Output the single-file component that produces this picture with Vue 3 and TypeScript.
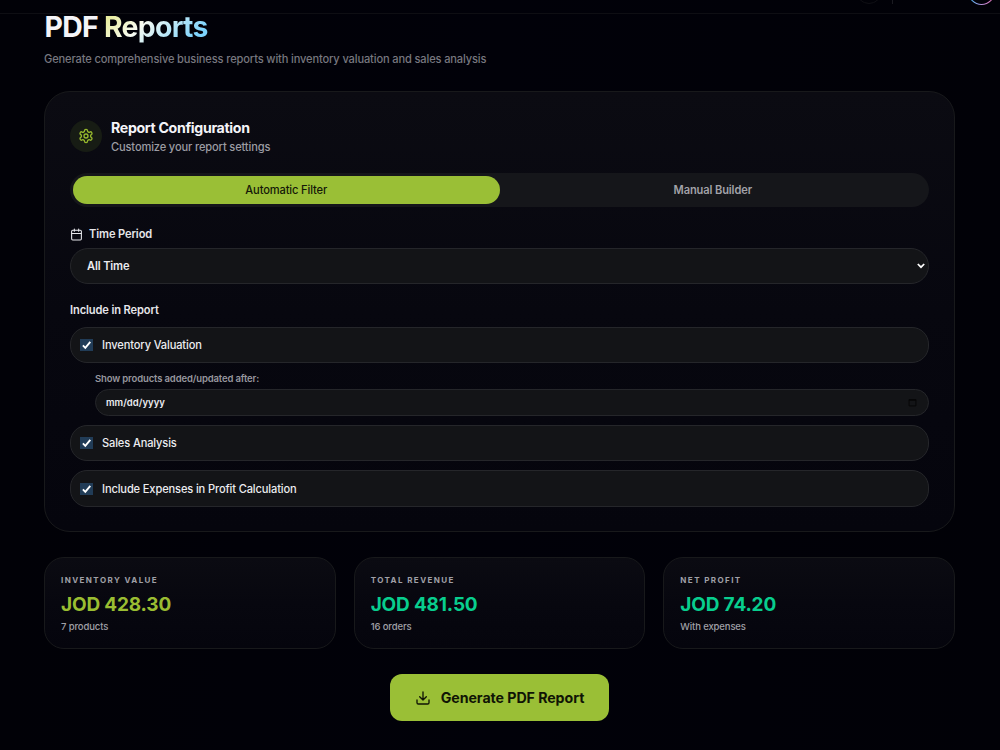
<script setup lang="ts">
import { ref } from 'vue'

interface Stat {
  label: string
  value: string
  note: string
  tone: 'lime' | 'green'
}

const mode = ref<'auto' | 'manual'>('auto')
const inventory = ref(true)
const sales = ref(true)
const expenses = ref(true)

const stats: Stat[] = [
  { label: 'Inventory Value', value: 'JOD 428.30', note: '7 products', tone: 'lime' },
  { label: 'Total Revenue', value: 'JOD 481.50', note: '16 orders', tone: 'green' },
  { label: 'Net Profit', value: 'JOD 74.20', note: 'With expenses', tone: 'green' },
]
</script>

<template>
  <div class="page">
    <header class="topbar">
      <span class="ghost"></span>
      <span class="divider"></span>
      <span class="avatar"></span>
    </header>

    <main class="content">
      <h1 class="title">PDF <span class="grad">Reports</span></h1>
      <p class="subtitle">Generate comprehensive business reports with inventory valuation and sales analysis</p>

      <section class="card config">
        <div class="card-head">
          <span class="gear">
            <svg viewBox="0 0 24 24" width="16" height="16" fill="none" stroke="currentColor" stroke-width="2" stroke-linecap="round" stroke-linejoin="round">
              <path d="M12.22 2h-.44a2 2 0 0 0-2 2v.18a2 2 0 0 1-1 1.73l-.43.25a2 2 0 0 1-2 0l-.15-.08a2 2 0 0 0-2.73.73l-.22.38a2 2 0 0 0 .73 2.73l.15.1a2 2 0 0 1 1 1.72v.51a2 2 0 0 1-1 1.74l-.15.09a2 2 0 0 0-.73 2.73l.22.38a2 2 0 0 0 2.73.73l.15-.08a2 2 0 0 1 2 0l.43.25a2 2 0 0 1 1 1.73V20a2 2 0 0 0 2 2h.44a2 2 0 0 0 2-2v-.18a2 2 0 0 1 1-1.73l.43-.25a2 2 0 0 1 2 0l.15.08a2 2 0 0 0 2.73-.73l.22-.39a2 2 0 0 0-.73-2.73l-.15-.08a2 2 0 0 1-1-1.74v-.5a2 2 0 0 1 1-1.74l.15-.09a2 2 0 0 0 .73-2.73l-.22-.38a2 2 0 0 0-2.73-.73l-.15.08a2 2 0 0 1-2 0l-.43-.25a2 2 0 0 1-1-1.73V4a2 2 0 0 0-2-2z" />
              <circle cx="12" cy="12" r="3" />
            </svg>
          </span>
          <div>
            <h2 class="head-title">Report Configuration</h2>
            <p class="head-sub">Customize your report settings</p>
          </div>
        </div>

        <div class="tabs">
          <button class="tab" :class="{ active: mode === 'auto' }" @click="mode = 'auto'">Automatic Filter</button>
          <button class="tab" :class="{ active: mode === 'manual' }" @click="mode = 'manual'">Manual Builder</button>
        </div>

        <div class="label period">
          <svg viewBox="0 0 24 24" width="13" height="13" fill="none" stroke="currentColor" stroke-width="2" stroke-linecap="round" stroke-linejoin="round">
            <rect x="3" y="4" width="18" height="18" rx="2" />
            <path d="M16 2v4M8 2v4M3 10h18" />
          </svg>
          <span>Time Period</span>
        </div>
        <div class="field select">
          <span>All Time</span>
          <svg viewBox="0 0 8 6" width="8" height="6" fill="none" stroke="#fff" stroke-width="1.7">
            <path d="M0.8 1 4 4.2 7.2 1" />
          </svg>
        </div>

        <div class="label include">Include in Report</div>
        <label class="field option" @click="inventory = !inventory">
          <span class="check"><svg v-if="inventory" viewBox="0 0 12 12" width="13" height="12"><path d="M2.4 6.4 4.8 8.8 9.8 2.9" /></svg></span>
          <span>Inventory Valuation</span>
        </label>
        <div class="nested">
          <div class="nested-label">Show products added/updated after:</div>
          <div class="field date">
            <span>mm/dd/yyyy</span>
            <svg viewBox="0 0 10 10" width="9" height="9" fill="none" stroke="#060607" stroke-width="1.1">
              <path d="M1.2 2h7.6v6.8H1.2z" /><path d="M1 2.2h8" stroke-width="1.6" />
            </svg>
          </div>
        </div>
        <label class="field option" @click="sales = !sales">
          <span class="check"><svg v-if="sales" viewBox="0 0 12 12" width="13" height="12"><path d="M2.4 6.4 4.8 8.8 9.8 2.9" /></svg></span>
          <span>Sales Analysis</span>
        </label>
        <label class="field option last" @click="expenses = !expenses">
          <span class="check"><svg v-if="expenses" viewBox="0 0 12 12" width="13" height="12"><path d="M2.4 6.4 4.8 8.8 9.8 2.9" /></svg></span>
          <span>Include Expenses in Profit Calculation</span>
        </label>
      </section>

      <section class="stats">
        <div v-for="s in stats" :key="s.label" class="card stat">
          <div class="stat-label">{{ s.label }}</div>
          <div class="stat-value" :class="s.tone">{{ s.value }}</div>
          <div class="stat-note">{{ s.note }}</div>
        </div>
      </section>

      <button class="generate">
        <svg viewBox="0 0 24 24" width="16" height="16" fill="none" stroke="currentColor" stroke-width="2" stroke-linecap="round" stroke-linejoin="round">
          <path d="M21 15v4a2 2 0 0 1-2 2H5a2 2 0 0 1-2-2v-4M7 10l5 5 5-5M12 15V3" />
        </svg>
        <span>Generate PDF Report</span>
      </button>
    </main>
  </div>
</template>

<style>
body {
  background: #010108;
  overflow: hidden;
}
</style>

<style scoped>
* {
  box-sizing: border-box;
}

.page {
  height: 750px;
  overflow: hidden;
  background: linear-gradient(90deg, #010107, #010109 50%, #010107);
  color: #f4f4f8;
  font-family: Inter, "Liberation Sans", sans-serif;
}

.topbar {
  position: relative;
  height: 14px;
  border-bottom: 1px solid #0e0e13;
  overflow: hidden;
}

.ghost,
.divider,
.avatar {
  position: absolute;
}

.ghost {
  left: 856px;
  top: -22px;
  width: 26px;
  height: 26px;
  border: 1px solid #101015;
  border-radius: 50%;
}

.divider {
  left: 892px;
  top: 0;
  width: 1px;
  height: 4px;
  background: #1b1b21;
}

.avatar {
  left: 968px;
  top: -22px;
  width: 27px;
  height: 27px;
  border-radius: 50%;
  background: linear-gradient(#010108, #010108) padding-box, linear-gradient(90deg, #38bdf8, #b590d8 50%, #e86bb0) border-box;
  border: 1px solid transparent;
}

.content {
  padding: 0 45px 0 44px;
}

h1,
h2,
p {
  margin: 0;
}

.title {
  height: 36px;
  margin-top: -5px;
  padding-left: 0.5px;
  font-size: 28.4px;
  line-height: 36px;
  font-weight: 700;
  letter-spacing: -0.71px;
}

.grad {
  display: inline-block;
  background: linear-gradient(135deg, #e9eda0 10%, #f8fbf2 38%, #7dd3fc 85%);
  background-clip: text;
  -webkit-background-clip: text;
  color: transparent;
}

.subtitle {
  height: 18px;
  margin-top: 5px;
  font-size: 11.1px;
  line-height: 18px;
  font-weight: 500;
  letter-spacing: -0.142px;
  color: #77777f;
}

.card {
  background: linear-gradient(180deg, #0b0b12, #07070f 50%, #05050d);
  border: 1px solid #18191b;
  box-shadow: inset 0 0 16px rgba(255, 255, 255, 0.012);
}

.config {
  height: 441px;
  margin-top: 23px;
  padding: 28px 25px 0;
  border-radius: 26px;
}

.card-head {
  display: flex;
  gap: 9px;
  height: 32px;
}

.gear {
  display: grid;
  place-items: center;
  width: 32px;
  height: 32px;
  border-radius: 50%;
  background: #171c14;
  color: #96b82d;
}

.head-title {
  margin-top: -2px;
  font-size: 14.2px;
  line-height: 20px;
  font-weight: 700;
  letter-spacing: -0.35px;
}

.head-sub {
  font-size: 11.1px;
  line-height: 18px;
  font-weight: 500;
  letter-spacing: -0.142px;
  color: #9c9ca3;
}

.tabs {
  display: flex;
  height: 34px;
  margin-top: 21px;
  padding: 3px;
  border-radius: 17px;
  background: #15161a;
}

.tab {
  flex: 1;
  height: 28px;
  padding: 1px 0 0;
  border: 0;
  border-radius: 14px;
  background: transparent;
  color: #a2a2a8;
  font: 600 11.1px/27px Inter, "Liberation Sans", sans-serif;
  letter-spacing: -0.12px;
}

.tab.active {
  background: #9abf36;
  color: #141808;
  font-weight: 500;
}

.label {
  font-size: 11.1px;
  line-height: 16px;
  font-weight: 600;
  letter-spacing: -0.11px;
  color: #e6e6ea;
}

.period {
  display: flex;
  align-items: center;
  gap: 6px;
  margin-top: 19px;
}

.field {
  display: flex;
  align-items: center;
  border: 1px solid #25262a;
  background: #131417;
  font-size: 11.1px;
  font-weight: 500;
  letter-spacing: -0.135px;
  color: #ececf0;
}

.select {
  justify-content: space-between;
  height: 36px;
  margin-top: 6px;
  padding: 0 3px 0 16px;
  border-radius: 18px;
  font-weight: 600;
}

.include {
  margin-top: 18px;
}

.option {
  height: 36px;
  margin-top: 9px;
  padding-left: 9px;
  gap: 9px;
  border-radius: 17px;
}

.check {
  display: block;
  width: 13px;
  height: 12px;
  background: #213c57;
}

.check svg {
  display: block;
  fill: none;
  stroke: #fff;
  stroke-width: 1.9;
}

.nested {
  padding-left: 25px;
  margin-top: 9px;
}

.nested-label {
  font-size: 9.5px;
  line-height: 14px;
  font-weight: 600;
  letter-spacing: -0.135px;
  color: #97979e;
}

.date {
  justify-content: space-between;
  height: 27px;
  margin-top: 3px;
  padding: 0 11px 0 10px;
  border-radius: 13.5px;
  font-size: 9.5px;
  font-weight: 600;
  letter-spacing: 0.04px;
}

.last {
  height: 37px;
  margin-top: 9px;
}

.stats {
  display: grid;
  grid-template-columns: repeat(3, 1fr);
  gap: 18px;
  margin-top: 25px;
}

.stat {
  height: 92px;
  padding: 16px 16px 0;
  border-radius: 20px;
}

.stat-label {
  font-size: 8px;
  line-height: 12px;
  font-weight: 700;
  letter-spacing: 1.42px;
  text-transform: uppercase;
  color: #a0a0a7;
}

.stat-value {
  margin-top: 6px;
  font-size: 19px;
  line-height: 26px;
  font-weight: 700;
  letter-spacing: -0.17px;
}

.lime {
  color: #9abd32;
}

.green {
  color: #08ce8e;
}

.stat-note {
  margin-top: 3px;
  font-size: 9.5px;
  line-height: 12px;
  font-weight: 500;
  letter-spacing: -0.12px;
  color: #a0a0a7;
}

.generate {
  display: flex;
  align-items: center;
  justify-content: center;
  gap: 10px;
  width: 219px;
  height: 47px;
  margin: 25px auto 0;
  padding: 0;
  border: 0;
  border-radius: 12px;
  background: #9abf36;
  color: #101405;
  font: 700 14.2px/20px Inter, "Liberation Sans", sans-serif;
  letter-spacing: -0.06px;
}
</style>
